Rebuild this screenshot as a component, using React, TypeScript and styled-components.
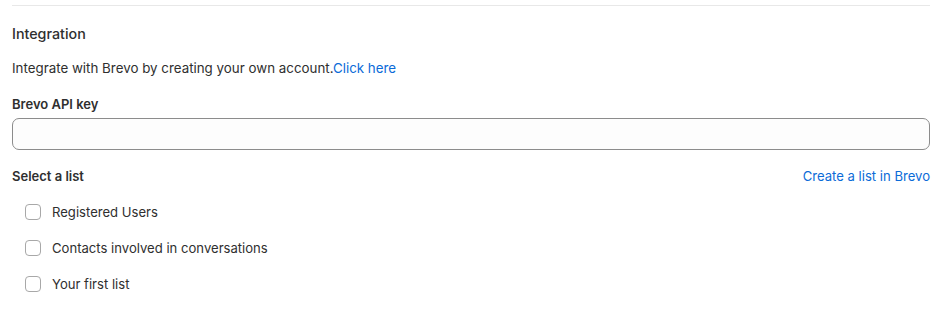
import React from 'react'
import styled, { createGlobalStyle } from 'styled-components'

const lists = ['Registered Users', 'Contacts involved in conversations', 'Your first list']

const GlobalStyle = createGlobalStyle`
  body {
    margin: 0;
    background: #ffffff;
    font-family: Inter, "Noto Sans", sans-serif;
    color: #2f2f2f;
  }
`

const App = () => (
  <>
    <GlobalStyle />
    <Wrapper>
      <Divider />
      <Heading>Integration</Heading>
      <Intro>
        Integrate with Brevo by creating your own account.
        <Link href="#">Click here</Link>
      </Intro>
      <Label htmlFor="api-key" $gap={21}>Brevo API key</Label>
      <Input id="api-key" type="text" />
      <ListHeader>
        <Label as="span" $gap={19}>Select a list</Label>
        <Link href="#">Create a list in Brevo</Link>
      </ListHeader>
      <Options>
        {lists.map(name => (
          <Option key={name}>
            <Box type="checkbox" />
            {name}
          </Option>
        ))}
      </Options>
    </Wrapper>
  </>
)

export default App

const Wrapper = styled.div`
  padding: 5px 7px 0 12px;
  display: flex;
  flex-direction: column;
`

const Divider = styled.hr`
  margin: 0;
  border: none;
  border-top: 1px solid #e8e8e8;
`

const Heading = styled.h3`
  margin: 19px 0 0 0;
  font-size: 14.3px;
  line-height: 17px;
  font-weight: 500;
  color: #2f2f2f;
`

const Intro = styled.p`
  margin: 18px 0 0 0;
  font-size: 13.35px;
  line-height: 16px;
  color: #2f2f2f;
`

const Link = styled.a`
  color: #0b6bd8;
  text-decoration: none;
  font-size: inherit;
`

const Label = styled.label<{ $gap: number }>`
  display: block;
  margin-top: ${p => p.$gap}px;
  font-size: 13px;
  line-height: 15px;
  font-weight: 600;
  color: #2f2f2f;
`

const Input = styled.input`
  margin-top: 6px;
  box-sizing: border-box;
  width: 100%;
  height: 32px;
  border: 1px solid #8c8c8c;
  border-radius: 7px;
  background: #fdfdfd;
  padding: 0 10px;
  font: inherit;
  outline: none;
`

const ListHeader = styled.div`
  display: flex;
  justify-content: space-between;
  align-items: flex-end;

  ${Link} {
    font-size: 13.1px;
    line-height: 15px;
  }
`

const Options = styled.div`
  display: flex;
  flex-direction: column;
  gap: 20px;
  margin-top: 20px;
  padding-left: 13px;
`

const Option = styled.label`
  display: flex;
  align-items: center;
  gap: 11px;
  font-size: 13.1px;
  line-height: 16px;
  color: #2f2f2f;
`

const Box = styled.input`
  appearance: none;
  margin: 0;
  width: 16px;
  height: 16px;
  border: 1px solid #a8a8a8;
  border-radius: 4px;
  background: #fff;
`
